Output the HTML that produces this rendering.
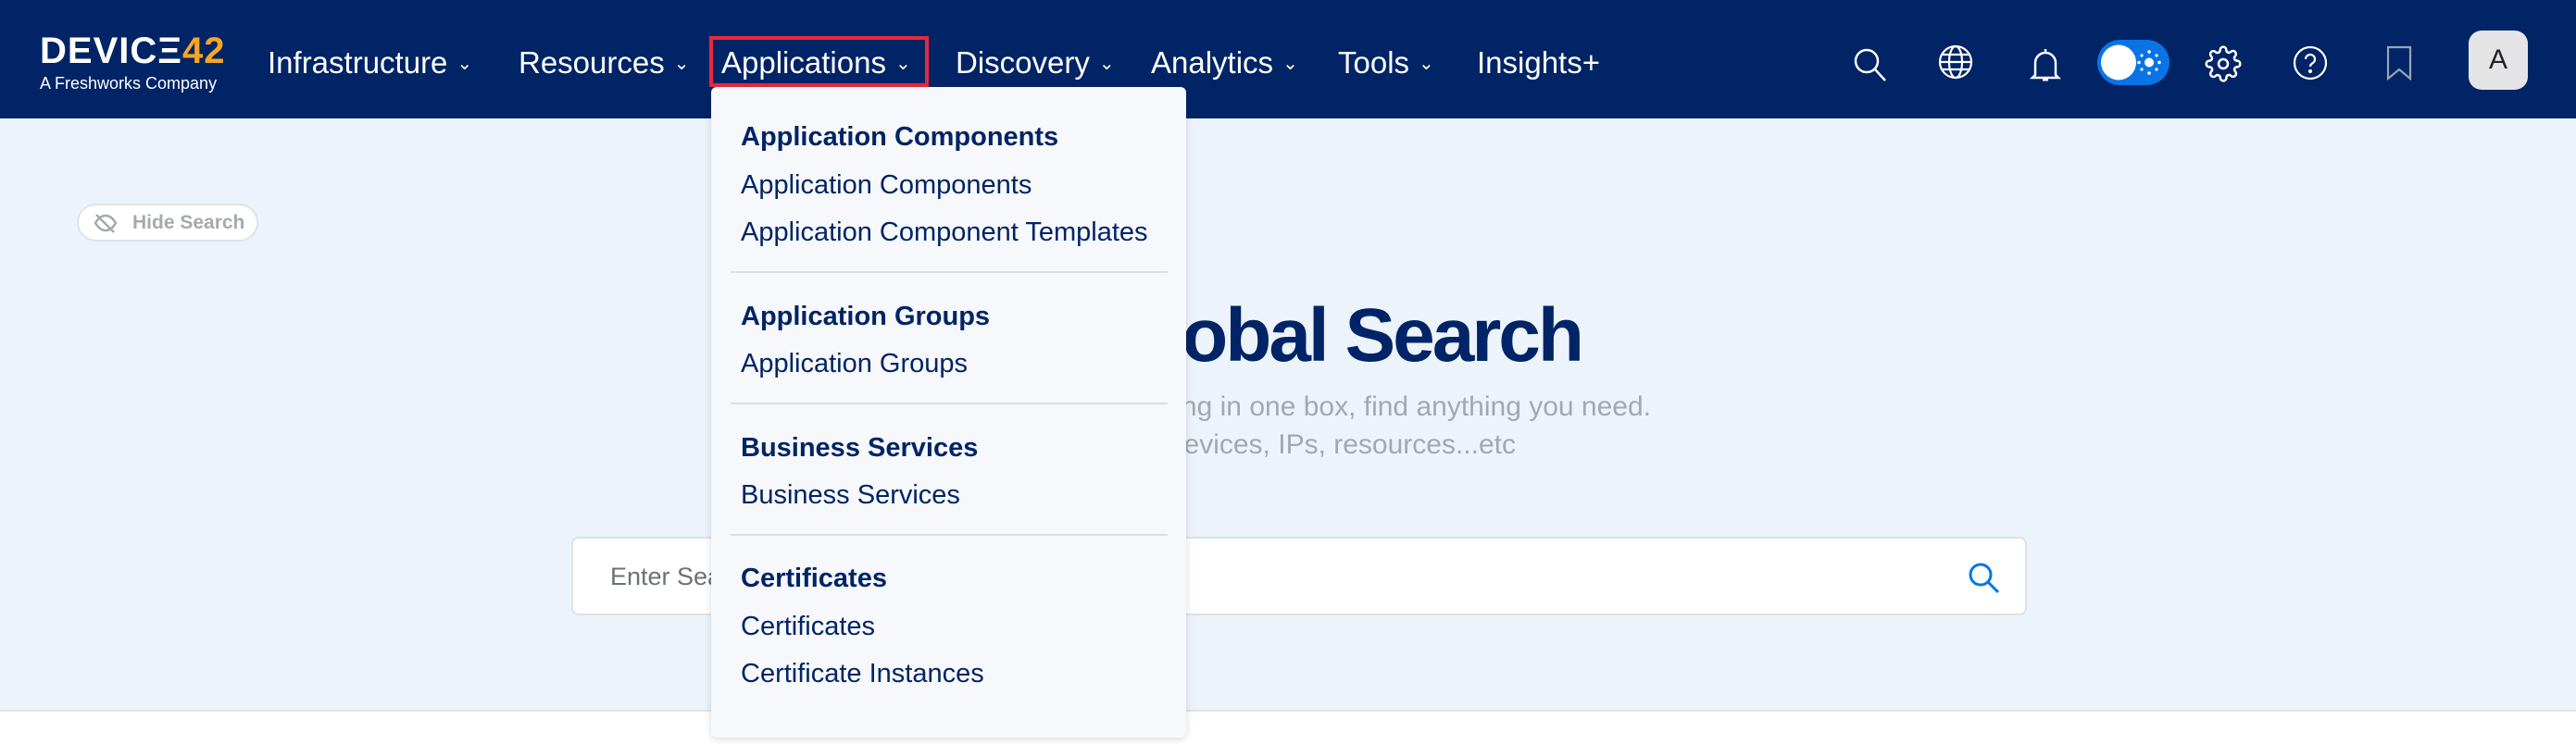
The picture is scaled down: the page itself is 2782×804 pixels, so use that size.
<!DOCTYPE html>
<html><head><meta charset="utf-8"><style>
*{margin:0;padding:0;box-sizing:border-box}
body{width:2782px;height:804px;overflow:hidden;background:#edf3fb;font-family:"Liberation Sans",sans-serif;position:relative}
.nav{position:absolute;left:0;top:0;width:2782px;height:128px;background:#002466}
.logo{position:absolute;left:43px;top:33px;color:#fff;font-weight:bold;font-size:40px;letter-spacing:1px}
.logo span{color:#f6a623}
.tag{position:absolute;left:43px;top:80px;color:#fff;font-size:18px}
.ni{position:absolute;top:49px;color:#fff;font-size:33px;white-space:nowrap}
.ni i{font-style:normal;font-size:20px;margin-left:10px;position:relative;top:-4px}
.red{position:absolute;left:766px;top:39px;width:237px;height:55px;border:4px solid #e8283d}
.dd{position:absolute;left:768px;top:94px;width:513px;height:703px;background:#f6f8fb;border-radius:6px;box-shadow:0 2px 8px rgba(0,0,0,.15)}
.di{position:absolute;left:32px;font-size:29px;color:#002466;white-space:nowrap}
.di.b{font-weight:bold}
.hr{position:absolute;left:21px;width:472px;height:2px;background:#dcdee2}
.pill{position:absolute;left:83px;top:220px;width:196px;height:41px;border-radius:21px;background:#fff;border:2px solid #dfe2e6;color:#a5a9b0;font-weight:bold;font-size:21px;line-height:37px;padding-left:58px}
.title{position:absolute;right:1074px;top:316px;font-size:82px;font-weight:bold;color:#002466;letter-spacing:-3px;white-space:nowrap}
.sub{position:absolute;right:999px;font-size:30px;color:#a3a7ae;white-space:nowrap}
.box{position:absolute;left:617px;top:580px;width:1572px;height:85px;background:#fff;border:2px solid #dde1e6;border-radius:8px}
.ph{position:absolute;left:40px;top:26px;font-size:27px;color:#6b7079}
.foot{position:absolute;left:0;top:767px;width:2782px;height:37px;background:#fff;border-top:2px solid #dfe3e8}
svg{position:absolute}
</style></head><body>
<div class="nav">
<div class="logo">DEVIC&#926;<span>42</span></div>
<div class="tag">A Freshworks Company</div>
<div class="ni" style="left:289px">Infrastructure<i>&#8964;</i></div>
<div class="ni" style="left:560px">Resources<i>&#8964;</i></div>
<div class="ni" style="left:779px">Applications<i>&#8964;</i></div>
<div class="ni" style="left:1032px">Discovery<i>&#8964;</i></div>
<div class="ni" style="left:1243px">Analytics<i>&#8964;</i></div>
<div class="ni" style="left:1445px">Tools<i>&#8964;</i></div>
<div class="ni" style="left:1595px">Insights+</div>
<div class="red"></div>
<svg style="left:2000px;top:50px" width="40" height="40" viewBox="0 0 40 40" fill="none" stroke="#fff" stroke-width="2.5"><circle cx="16" cy="16" r="12"/><path d="M25 25l11 12"/></svg>
<svg style="left:2093px;top:48px" width="38" height="38" viewBox="0 0 38 38" fill="none" stroke="#fff" stroke-width="2.2"><circle cx="19" cy="19" r="17"/><ellipse cx="19" cy="19" rx="7" ry="17"/><path d="M2 19h34M5 11h28M5 27h28"/></svg>
<svg style="left:2190px;top:50px" width="38" height="40" viewBox="0 0 38 40" fill="none" stroke="#fff" stroke-width="2.5"><path d="M19 3v3M8 31V18a11 11 0 0122 0v13l3 3H5z"/><path d="M16 36h6" stroke-width="3"/></svg>
<svg style="left:2265px;top:43px" width="78" height="49"><rect width="78" height="49" rx="24.5" fill="#0a74e6"/><circle cx="23" cy="24.5" r="19" fill="#fff"/><circle cx="56" cy="24.5" r="5" fill="#fff"/><g fill="#fff"><circle cx="56" cy="13" r="1.8"/><circle cx="56" cy="36" r="1.8"/><circle cx="45" cy="24.5" r="1.8"/><circle cx="67" cy="24.5" r="1.8"/><circle cx="48" cy="17" r="1.6"/><circle cx="64" cy="17" r="1.6"/><circle cx="48" cy="32" r="1.6"/><circle cx="64" cy="32" r="1.6"/></g></svg>
<svg style="left:2381px;top:49px" width="40" height="40" viewBox="0 0 24 24" fill="none" stroke="#fff" stroke-width="1.5"><circle cx="12" cy="12" r="3"/><path d="M19.4 15a1.65 1.65 0 00.33 1.82l.06.06a2 2 0 11-2.83 2.83l-.06-.06a1.65 1.65 0 00-1.82-.33 1.65 1.65 0 00-1 1.51V21a2 2 0 11-4 0v-.09A1.65 1.65 0 009 19.4a1.65 1.65 0 00-1.82.33l-.06.06a2 2 0 11-2.830-2.83l.06-.06A1.65 1.65 0 004.68 15a1.65 1.65 0 00-1.51-1H3a2 2 0 110-4h.09A1.65 1.65 0 004.6 9a1.65 1.65 0 00-.33-1.82l-.06-.06a2 2 0 112.83-2.83l.06.06A1.65 1.65 0 009 4.68a1.65 1.65 0 001-1.51V3a2 2 0 114 0v.09a1.65 1.65 0 001 1.51 1.65 1.65 0 001.82-.33l.06-.06a2 2 0 112.83 2.83l-.06.06A1.65 1.65 0 0019.4 9a1.65 1.65 0 001.51 1H21a2 2 0 110 4h-.09a1.65 1.65 0 00-1.51 1z"/></svg>
<svg style="left:2476px;top:49px" width="38" height="38" viewBox="0 0 38 38" fill="none" stroke="#fff" stroke-width="2.2"><circle cx="19" cy="19" r="17"/><path d="M14 15a5 5 0 119 3c-2 2-4 2-4 5"/><circle cx="19" cy="28" r="1" fill="#fff"/></svg>
<svg style="left:2576px;top:49px" width="30" height="38" viewBox="0 0 30 38" fill="none" stroke="#9aa3b5" stroke-width="2.2"><path d="M3 2h24v34l-12-10-12 10z"/></svg>
<div style="position:absolute;left:2666px;top:33px;width:64px;height:64px;border-radius:14px;background:#e4e4e6;color:#222;font-size:30px;text-align:center;line-height:64px">A</div>
</div>
<div class="pill">Hide Search</div>
<svg style="left:101px;top:229px" width="26" height="24" viewBox="0 0 26 24" fill="none" stroke="#a5a9b0" stroke-width="2.5"><path d="M2 12c3-5 7-8 11-8s8 3 11 8c-3 5-7 8-11 8s-8-3-11-8z"/><path d="M3 3l19 19"/></svg>
<div class="title">Global Search</div>
<div class="sub" style="top:423px">Search everything in one box, find anything you need.</div>
<div class="sub" style="top:464px;right:1145px">Search for devices, IPs, resources...etc</div>
<div class="box"><div class="ph">Enter Search...</div>
<svg style="left:1505px;top:24px" width="38" height="38" viewBox="0 0 38 38" fill="none" stroke="#0a74e6" stroke-width="3"><circle cx="15" cy="15" r="11"/><path d="M23 23l11 11"/></svg></div>
<div class="foot"></div>
<div class="dd">
<div class="di b" style="top:38px">Application Components</div>
<div class="di" style="top:90px">Application Components</div>
<div class="di" style="top:141px">Application Component Templates</div>
<div class="hr" style="top:199px"></div>
<div class="di b" style="top:232px">Application Groups</div>
<div class="di" style="top:283px">Application Groups</div>
<div class="hr" style="top:341px"></div>
<div class="di b" style="top:374px">Business Services</div>
<div class="di" style="top:425px">Business Services</div>
<div class="hr" style="top:483px"></div>
<div class="di b" style="top:515px">Certificates</div>
<div class="di" style="top:567px">Certificates</div>
<div class="di" style="top:618px">Certificate Instances</div>
</div>
</body></html>
